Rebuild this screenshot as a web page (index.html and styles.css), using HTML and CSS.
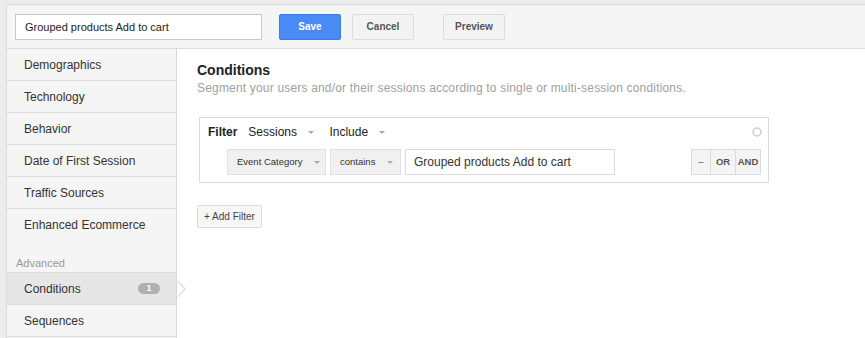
FILE: index.html
```html
<!DOCTYPE html>
<html lang="en">
<head>
    <meta charset="UTF-8">
    <meta name="viewport" content="width=device-width, initial-scale=1.0">
    <title>segment editor</title>
    <link rel="stylesheet" href="styles.css">
</head>
<body>
    <div class="app">
        <div class="topbar">
            <div class="nameInput">Grouped products Add to cart</div>
            <div class="btn save">Save</div>
            <div class="btn cancel">Cancel</div>
            <div class="btn preview">Preview</div>
        </div>
        <div class="body">
            <div class="sidebar">
                <div class="item">Demographics</div>
                <div class="item">Technology</div>
                <div class="item">Behavior</div>
                <div class="item">Date of First Session</div>
                <div class="item">Traffic Sources</div>
                <div class="item last">Enhanced Ecommerce</div>
                <div class="label">Advanced</div>
                <div class="item active">Conditions <span class="badge">1</span>
                    <svg class="pointer" width="9" height="16" viewBox="0 0 9 16"><path d="M1 0 L8 8 L1 16" fill="#fff" stroke="#e2e2e2" stroke-width="1.5"/></svg>
                </div>
                <div class="item">Sequences</div>
            </div>
            <div class="main">
                <h2>Conditions</h2>
                <p class="sub">Segment your users and/or their sessions according to single or multi-session conditions.</p>
                <div class="filterBox">
                    <div class="filterHead">
                        <b>Filter</b>
                        <span class="drop">Sessions <i class="caret"></i></span>
                        <span class="drop">Include <i class="caret"></i></span>
                        <svg class="close" width="10" height="10" viewBox="0 0 10 10"><circle cx="5" cy="5" r="4" fill="none" stroke="#ccc" stroke-width="1.5"/></svg>
                    </div>
                    <div class="filterRow">
                        <div class="select wide">Event Category <i class="caret"></i></div>
                        <div class="select">contains <i class="caret"></i></div>
                        <div class="valueInput">Grouped products Add to cart</div>
                        <div class="logic">
                            <div class="minus">&ndash;</div>
                            <div>OR</div>
                            <div>AND</div>
                        </div>
                    </div>
                </div>
                <div class="addFilter">+ Add Filter</div>
            </div>
        </div>
    </div>
</body>
</html>
```

FILE: styles.css
```css
body {
  margin: 0;
  padding: 4px 0 0 6px;
  background-color: #ececec;
  font-family: "Liberation Sans", Arial, sans-serif;
  font-size: 12px;
  color: #333;
  height: 334px;
  overflow: hidden;
}

.app {
  border-top: 1px solid #dcdcdc;
  border-left: 1px solid #dcdcdc;
  background-color: #fff;
  height: 100%;
}

.topbar {
  display: flex;
  align-items: center;
  height: 43px;
  padding-left: 8px;
  background-color: #f5f5f5;
  border-bottom: 1px solid #dcdcdc;
}

.nameInput {
  width: 236px;
  height: 24px;
  line-height: 24px;
  padding-left: 9px;
  border: 1px solid #c8c8c8;
  background-color: #fff;
  font-size: 11px;
  color: #222;
  margin-right: 17px;
}

.btn {
  height: 24px;
  line-height: 24px;
  width: 60px;
  text-align: center;
  font-size: 10px;
  font-weight: bold;
  border: 1px solid #dcdcdc;
  border-radius: 2px;
  background-color: #f3f3f3;
  color: #555;
}

.save {
  background-color: #4a8af4;
  border-color: #3b7be8;
  color: #fff;
  margin-right: 11px;
}

.cancel {
  margin-right: 29px;
}

.body {
  display: flex;
  height: 289px;
}

.sidebar {
  width: 169px;
  background-color: #f5f5f5;
  border-right: 1px solid #d6d6d6;
}

.item {
  position: relative;
  display: flex;
  align-items: center;
  height: 31px;
  padding-left: 17px;
  border-bottom: 1px solid #dcdcdc;
  font-size: 12px;
  color: #333;
}

.item.last {
  border-bottom: none;
}

.label {
  padding: 17px 0 0 9px;
  height: 15px;
  font-size: 11px;
  color: #999;
  border-bottom: 1px solid #dcdcdc;
}

.item.active {
  background-color: #e6e6e6;
}

.badge {
  margin-left: auto;
  margin-right: 16px;
  width: 22px;
  height: 11px;
  line-height: 11px;
  border-radius: 6px;
  background-color: #b0b0b0;
  color: #fff;
  font-size: 9px;
  font-weight: bold;
  text-align: center;
}

.pointer {
  position: absolute;
  right: -10px;
  top: 8px;
}

.main {
  flex: 1;
  padding: 10px 0 0 20px;
}

h2 {
  margin: 0;
  font-size: 14px;
  color: #222;
  line-height: 16px;
  padding-top: 3px;
}

.sub {
  margin: 3px 0 0;
  font-size: 12px;
  color: #a0a0a0;
  letter-spacing: 0.18px;
}

.filterBox {
  width: 568px;
  height: 64px;
  margin-top: 22px;
  margin-left: 2px;
  border: 1px solid #dcdcdc;
}

.filterHead {
  display: flex;
  align-items: center;
  height: 28px;
  padding-left: 8px;
  font-size: 12px;
  color: #222;
}

.filterHead b {
  margin-right: 11px;
}

.drop {
  margin-right: 15px;
}

.drop .caret {
  margin-left: 8px;
}

.caret {
  display: inline-block;
  width: 0;
  height: 0;
  margin-left: 6px;
  vertical-align: middle;
  border-left: 3px solid transparent;
  border-right: 3px solid transparent;
  border-top: 3px solid #aaa;
}

.close {
  margin-left: auto;
  margin-right: 6px;
}

.filterRow {
  display: flex;
  align-items: center;
  padding-left: 27px;
  margin-top: 3px;
}

.select {
  height: 24px;
  line-height: 24px;
  padding-left: 9px;
  width: 60px;
  border: 1px solid #e0e0e0;
  background-color: #f0f0f0;
  font-size: 9.5px;
  color: #333;
  margin-right: 4px;
}

.select.wide {
  width: 88px;
}

.select .caret {
  margin-left: 9px;
}

.valueInput {
  width: 200px;
  height: 24px;
  line-height: 24px;
  padding-left: 8px;
  border: 1px solid #dcdcdc;
  font-size: 12px;
  color: #333;
}

.logic {
  display: flex;
  margin-left: 76px;
  border: 1px solid #dcdcdc;
  background-color: #f4f4f4;
}

.logic div {
  height: 24px;
  line-height: 24px;
  width: 24px;
  text-align: center;
  font-size: 9.5px;
  font-weight: bold;
  color: #555;
  border-left: 1px solid #dcdcdc;
}

.logic .minus {
  border-left: none;
  width: 18px;
  font-weight: normal;
}

.addFilter {
  display: inline-block;
  margin-top: 22px;
  height: 21px;
  line-height: 21px;
  padding: 0 6px;
  border: 1px solid #dcdcdc;
  border-radius: 2px;
  background-color: #f7f7f7;
  font-size: 10px;
  color: #444;
}
```
